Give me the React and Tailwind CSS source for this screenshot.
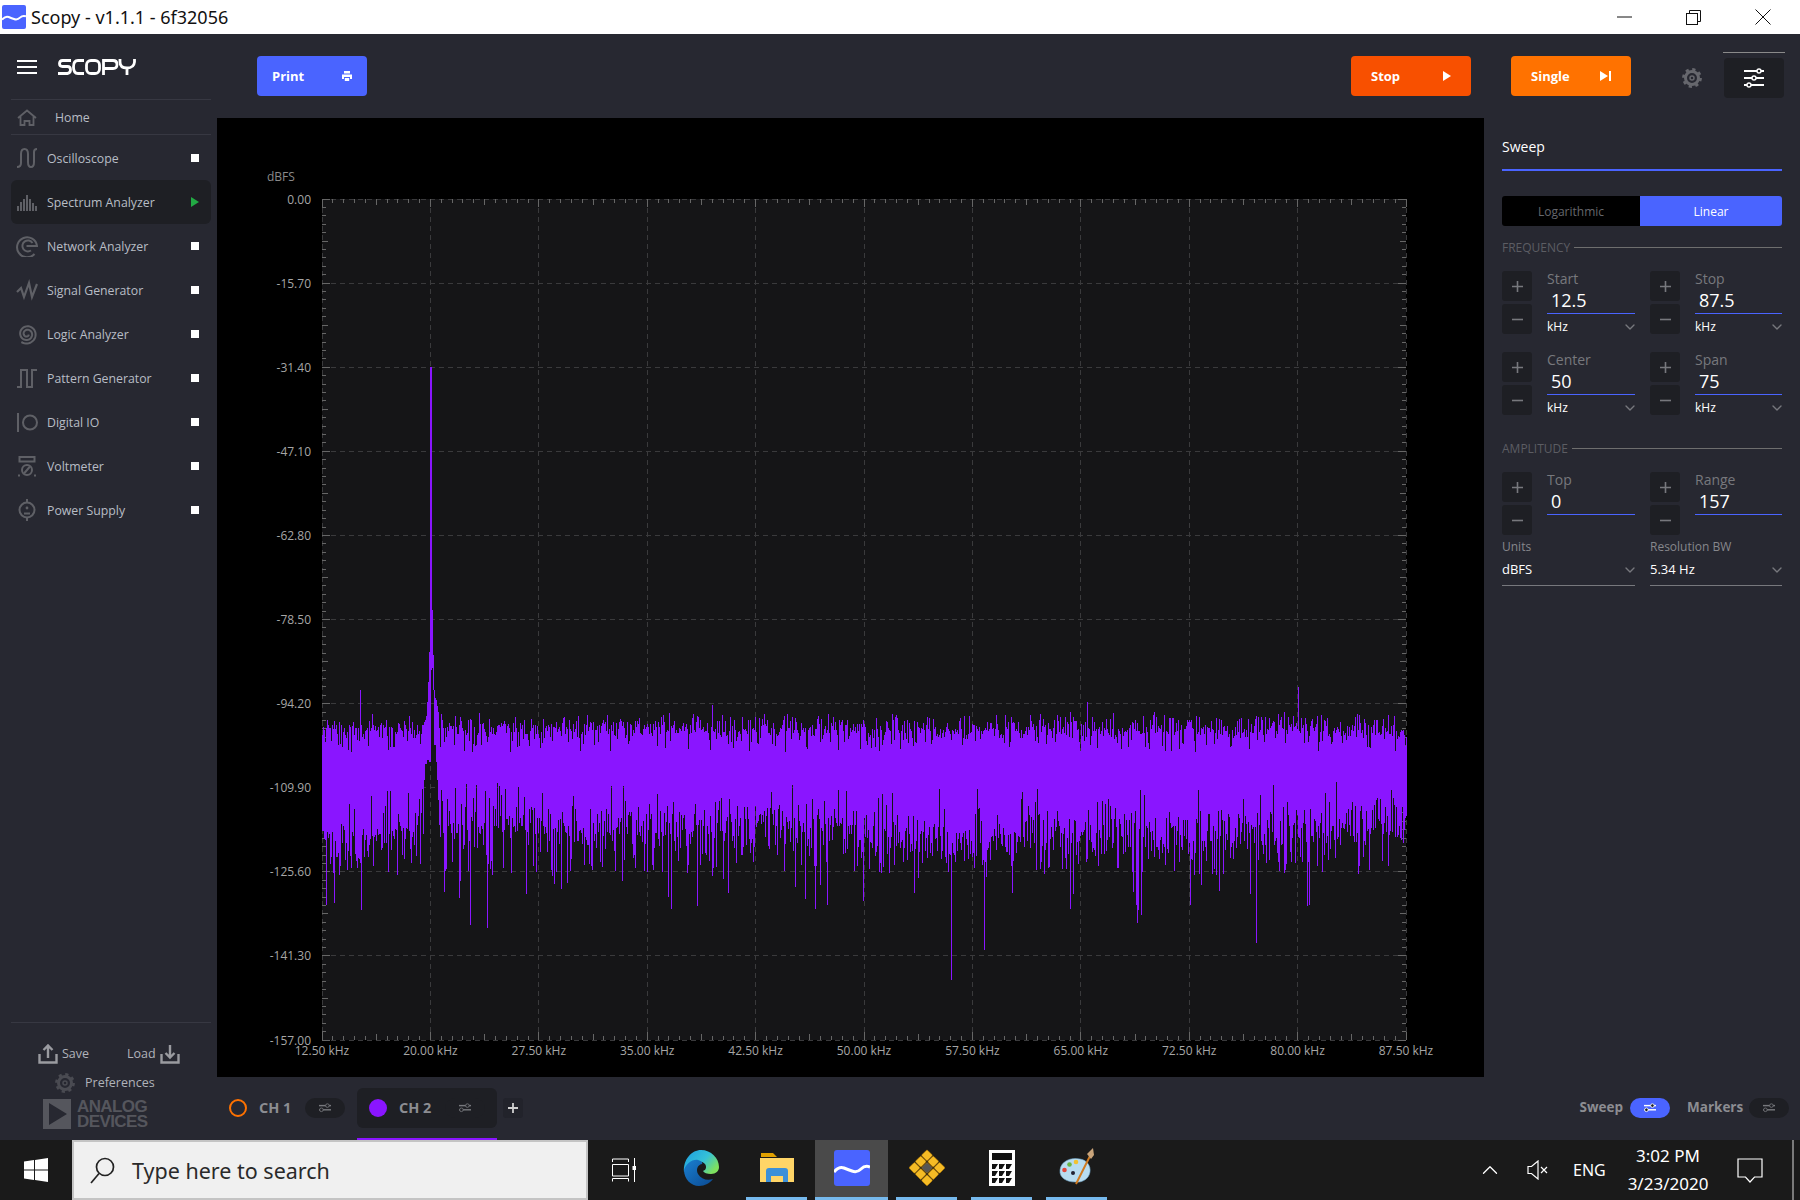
import { ChevronDown, ChevronUp } from "lucide-react";

const PLOT_L = 322, PLOT_W = 1084, PLOT_T = 199, PLOT_H = 841;
const PURPLE = "#8a15ff";

const rng = (seed) => () => {
    seed |= 0; seed = seed + 0x6D2B79F5 | 0;
    let t = Math.imul(seed ^ seed >>> 15, 1 | seed);
    t = t + Math.imul(t ^ t >>> 7, 61 | t) ^ t;
    return ((t ^ t >>> 14) >>> 0) / 4294967296;
};

const FORCED_TOP = { 360: 690, 1298: 687, 1087: 702, 712: 705 };
const FORCED_BOTTOM = { 951: 980, 984: 950, 1256: 943, 1137: 923, 1141: 915, 470: 925, 487: 928, 1012: 893, 1190: 905, 326: 905, 334: 903, 820: 885 };

// columns around the 20 kHz tone, read off the reference
const PEAK = {
    424: [722, 780], 425: [720, 764], 426: [716, 764], 427: [702, 760], 428: [682, 760], 429: [652, 762],
    430: [367, 762], 431: [367, 670], 432: [610, 668], 433: [655, 690], 434: [690, 745], 435: [698, 745],
    436: [700, 762], 437: [706, 780], 438: [712, 800],
};

const buildSpectrum = () => {
    const rand = rng(2024);
    const gauss = () => (rand() + rand() + rand() + rand() - 2) * 1.73;
    let d = "";
    for (let x = PLOT_L; x <= PLOT_L + PLOT_W; x++) {
        const drift = Math.sin(x / 47) * 5 + Math.sin(x / 131) * 6;
        const rt = rand();
        let top = 729 + gauss() * 6;
        if (rt < 0.1) top = 740 + rand() * 12;
        else if (rt < 0.16) top = 712 + rand() * 9;
        const rb = rand();
        let bottom = 832 + drift + gauss() * 13;
        if (rb < 0.08) bottom = 782 + rand() * 34;
        else if (rb < 0.2) bottom = 852 + rand() * 24;
        else if (rb < 0.23) bottom = 872 + rand() * 40;
        if (FORCED_TOP[x]) top = FORCED_TOP[x];
        if (FORCED_BOTTOM[x]) bottom = FORCED_BOTTOM[x];
        if (PEAK[x]) [top, bottom] = PEAK[x];
        d += `M${x + 0.5} ${top.toFixed(1)}V${bottom.toFixed(1)}`;
    }
    return d;
};
const spectrumPath = buildSpectrum();

const yLabels = ["0.00", "-15.70", "-31.40", "-47.10", "-62.80", "-78.50", "-94.20", "-109.90", "-125.60", "-141.30", "-157.00"];
const xLabels = ["12.50 kHz", "20.00 kHz", "27.50 kHz", "35.00 kHz", "42.50 kHz", "50.00 kHz", "57.50 kHz", "65.00 kHz", "72.50 kHz", "80.00 kHz", "87.50 kHz"];

const tickPaths = () => {
    let d = "";
    for (let i = 0; i <= 100; i++) {
        const y = PLOT_T + (PLOT_H * i) / 100;
        const x = PLOT_L + (PLOT_W * i) / 100;
        const len = i % 10 === 0 ? 8 : i % 5 === 0 ? 6 : 4;
        d += `M${PLOT_L} ${y.toFixed(1)}h${len}`;
        d += `M${PLOT_L + PLOT_W} ${y.toFixed(1)}h${-len}`;
        d += `M${x.toFixed(1)} ${PLOT_T}v${len}`;
        d += `M${x.toFixed(1)} ${PLOT_T + PLOT_H}v${-len}`;
    }
    return d;
};

const Plot = () => (
    <svg width="1267" height="959" viewBox="217 118 1267 959" className="block shrink-0">
        <rect x="217" y="118" width="1267" height="959" fill="#000" />
        <rect x={PLOT_L} y={PLOT_T} width={PLOT_W} height={PLOT_H} fill="#151517" />
        {yLabels.map((_, i) => (
            <line key={i} x1={PLOT_L} x2={PLOT_L + PLOT_W} y1={PLOT_T + 84.1 * i} y2={PLOT_T + 84.1 * i} stroke="#3a3a3c" strokeDasharray="5 4" shapeRendering="crispEdges" />
        ))}
        {xLabels.map((_, i) => (
            <line key={i} y1={PLOT_T} y2={PLOT_T + PLOT_H} x1={PLOT_L + 108.4 * i} x2={PLOT_L + 108.4 * i} stroke="#3a3a3c" strokeDasharray="5 4" shapeRendering="crispEdges" />
        ))}
        <path d={tickPaths()} stroke="#666" fill="none" shapeRendering="crispEdges" />
        <path d={spectrumPath} stroke={PURPLE} strokeWidth="1" fill="none" shapeRendering="crispEdges" />
        <g fontFamily="'Open Sans', sans-serif" fontSize="12" fill="#a6a6a6">
            <text x="267" y="181" fill="#8a8a8a">dBFS</text>
            {yLabels.map((t, i) => (
                <text key={t} x="311" y={PLOT_T + 84.1 * i + 4.5} textAnchor="end">{t}</text>
            ))}
            {xLabels.map((t, i) => (
                <text key={t} x={PLOT_L + 108.4 * i} y="1055" textAnchor="middle">{t}</text>
            ))}
        </g>
    </svg>
);

const IconBase = ({ children }) => (
    <svg width="22" height="22" viewBox="0 0 22 22" fill="none" stroke="#5f6066" strokeWidth="2" className="shrink-0">{children}</svg>
);

const spiral = () => {
    let d = "";
    for (let i = 0; i <= 90; i++) {
        const a = (i / 90) * Math.PI * 4.6 + 0.3;
        const r = 1.8 + (8 * i) / 90;
        d += `${i ? "L" : "M"}${(11 + r * Math.cos(a)).toFixed(2)} ${(11 + r * Math.sin(a)).toFixed(2)}`;
    }
    return d;
};

const navIcons = {
    scope: <IconBase><path d="M1 20q4 0 4-4V7q0-5 3.500-5T12 7v8q0 5 3 5t3-5V5q0-3 3-3" /></IconBase>,
    spectrum: <IconBase><path d="M2 20v-5M5 20v-9M8 20V8M11 20V4M14 20V8M17 20v-8M20 20v-5" /></IconBase>,
    network: <IconBase><path d="M18.500 19A10 10 0 1 1 21 11H10.500" /><path d="M15 15.500A5.500 5.500 0 1 1 16.500 8" /></IconBase>,
    signal: <IconBase><path d="M1 13l4-4 3 9 5-14 3 14 5-13" strokeWidth="2.200" /></IconBase>,
    logic: <IconBase><path d={spiral()} /></IconBase>,
    pattern: <IconBase><path d="M1 20h4V3h6v17h5V3h5" /></IconBase>,
    digital: <IconBase><path d="M2 2v19" /><circle cx="14" cy="11.500" r="7" /></IconBase>,
    volt: <IconBase><rect x="3.500" y="2" width="15" height="4.500" /><circle cx="11" cy="15" r="5" /><path d="M8 18.500l6-7M2 20.500h2M18 20.500h2" /></IconBase>,
    power: <IconBase><circle cx="11" cy="11" r="7.500" /><path d="M11 0v3.500M11 18.500V22M8 14.500h6" /><circle cx="11" cy="9" r="1.400" fill="#5f6066" stroke="none" /></IconBase>,
};

const navItems = [
    { name: "Oscilloscope", icon: "scope" },
    { name: "Spectrum Analyzer", icon: "spectrum", active: true },
    { name: "Network Analyzer", icon: "network" },
    { name: "Signal Generator", icon: "signal" },
    { name: "Logic Analyzer", icon: "logic" },
    { name: "Pattern Generator", icon: "pattern" },
    { name: "Digital IO", icon: "digital" },
    { name: "Voltmeter", icon: "volt" },
    { name: "Power Supply", icon: "power" },
];

const ScopyLogo = () => (
    <svg width="78" height="16" viewBox="0 0 78 16" fill="none" stroke="#fff" strokeWidth="2.800" role="img" aria-label="Scopy">
        <path d="M13 1.500H4.500Q1.500 1.500 1.500 4.500T4.500 7.500h5Q12.500 7.500 12.500 10.800T9.500 14.500H0" />
        <path d="M26 1.500h-6Q15.500 1.500 15.500 8T20 14.500h6" />
        <rect x="28.500" y="1.500" width="13" height="13" rx="4.500" />
        <path d="M45.500 16V1.500h9.500q4 0 4 4t-4 4h-9.500" />
        <path d="M62 0v3q0 6 7 6t7.500-6V0M69 9v7" />
    </svg>
);

const Sliders = ({ color = "#fff", w = 20, lines = 3 }) => {
    const rows = lines === 3 ? [[4, 15], [11, 10], [18, 5]] : [[7, 14], [14, 4]];
    return (
        <svg width={w} height="22" viewBox="0 0 20 22" fill="none" className="shrink-0">
            {rows.map(([y, k], i) => (
                <g key={i}>
                    <path d={`M0 ${y}H20`} stroke={color} strokeWidth={lines === 3 ? 2 : 2.4} />
                    <circle cx={k} cy={y} r={lines === 3 ? 2 : 3} fill="#1e1f24" stroke={color} strokeWidth="1.400" />
                </g>
            ))}
        </svg>
    );
};

const Pill = ({ blue }) => (
    <div className={`w-10 h-5 rounded-full flex items-center justify-center shrink-0 ${blue ? "bg-[#4a64ff]" : "bg-[#1e1f24]"}`}>
        <Sliders color={blue ? "#fff" : "#77787d"} w={12} lines={2} />
    </div>
);

const Gear = ({ size = 20, color = "#66676d" }) => (
    <svg width={size} height={size} viewBox="0 0 20 20" fill="none" stroke={color} className="shrink-0">
        <circle cx="10" cy="10" r="6.500" strokeWidth="3" />
        <circle cx="10" cy="10" r="8.600" strokeWidth="2.600" strokeDasharray="3.200 3.550" />
        <circle cx="10" cy="10" r="2" strokeWidth="1.500" />
    </svg>
);

const Sidebar = () => (
    <div className="w-[217px] shrink-0 flex flex-col">
        <div className="h-[65px] flex items-center pl-[17px] pt-[1px]">
            <div className="w-5 h-[14px] flex flex-col justify-between">
                <div className="h-[2px] bg-white" />
                <div className="h-[2px] bg-white" />
                <div className="h-[2px] bg-white" />
            </div>
            <div className="ml-[21px] flex"><ScopyLogo /></div>
        </div>
        <div className="ml-[11px] mr-[6px] h-[36px] border-y border-[#373842] flex items-center pl-[6px]">
            <svg width="20" height="17" viewBox="0 0 20 17" fill="none" stroke="#5f6066" strokeWidth="1.800" className="shrink-0">
                <path d="M1 9l9-7.500L19 9M3.500 7.500v8.500h4v-4h5v4h4V7.500" />
            </svg>
            <span className="ml-[18px] pt-[2px] text-[12.3px] text-[#b8bdc5]">Home</span>
        </div>
        <div className="mt-[1px]">
            {navItems.map((item) => (
                <div key={item.name} className={`ml-[11px] mr-[6px] h-[44px] flex items-center pl-[6px] pr-[12px] rounded-md ${item.active ? "bg-[#1e1f24]" : ""}`}>
                    <div className="w-[22px] -ml-[1px] flex">{navIcons[item.icon]}</div>
                    <span className="ml-[9px] pt-[2px] text-[12.3px] text-[#b8bdc5] flex-1">{item.name}</span>
                    {item.active ? (
                        <svg width="8" height="10" viewBox="0 0 8 10" className="shrink-0"><path d="M0 0l8 5-8 5z" fill="#22aa44" /></svg>
                    ) : (
                        <div className="w-2 h-2 bg-white" />
                    )}
                </div>
            ))}
        </div>
        <div className="mt-auto ml-[11px] mr-[6px] border-t border-[#373842] pt-[21px] pb-[11px]">
            <div className="flex items-center h-5 pl-[27px]">
                <svg width="20" height="20" viewBox="0 0 20 20" fill="none" stroke="#9a9ba0" strokeWidth="2.400" className="shrink-0">
                    <path d="M1.500 10v8.500h17V10M10 14V2M5.500 6L10 1.500 14.500 6" />
                </svg>
                <span className="ml-[4px] text-[12.5px] text-[#b0b3ba]">Save</span>
                <span className="ml-[38px] text-[12.5px] text-[#b0b3ba]">Load</span>
                <svg width="20" height="20" viewBox="0 0 20 20" fill="none" stroke="#9a9ba0" strokeWidth="2.400" className="ml-[4px] shrink-0">
                    <path d="M1.500 10v8.500h17V10M10 1v12M5.500 9L10 13.500 14.500 9" />
                </svg>
            </div>
            <div className="flex items-center h-5 mt-[9px] pl-[44px]">
                <Gear color="#4a4b52" />
                <span className="ml-[10px] text-[12.5px] text-[#b0b3ba]">Preferences</span>
            </div>
            <div className="flex items-center mt-[6px] pl-[32px]">
                <svg width="28" height="30" viewBox="0 0 28 30" className="shrink-0">
                    <path fillRule="evenodd" d="M0 0h28v30H0zM6 4v22l18-11z" fill="#55565d" />
                </svg>
                <div className="ml-[6px] text-[#55565d] font-bold text-[17px] leading-[15px] font-['Liberation_Sans',sans-serif] tracking-[-0.6px]">
                    <div>ANALOG</div>
                    <div>DEVICES</div>
                </div>
            </div>
        </div>
    </div>
);

const TopButton = ({ label, color, width, pad, className = "", children }) => (
    <div className={`h-10 rounded flex items-center justify-between text-[13px] font-bold text-white shrink-0 ${pad} ${color} ${width} ${className}`}>
        <span className="pt-[2px]">{label}</span>
        {children}
    </div>
);

const TopBar = () => (
    <div className="h-[84px] flex items-center pl-[40px] shrink-0">
        <TopButton label="Print" color="bg-[#4a64ff]" width="w-[110px]" pad="px-[15px]">
            <svg width="10" height="10" viewBox="0 0 10 10" fill="#fff" className="shrink-0"><path d="M2 0h6v2.500H2zM0 3.500h10V8H8V6H2v2H0zM2.800 7h4.400v3H2.800z" /></svg>
        </TopButton>
        <TopButton label="Stop" color="bg-[#f85000]" width="w-[120px]" pad="px-5" className="ml-[984px]">
            <svg width="8" height="10" viewBox="0 0 8 10" fill="#fff" className="shrink-0"><path d="M0 0l8 5-8 5z" /></svg>
        </TopButton>
        <TopButton label="Single" color="bg-[#ff7200]" width="w-[120px]" pad="px-5" className="ml-[40px]">
            <svg width="11" height="10" viewBox="0 0 11 10" fill="#fff" className="shrink-0"><path d="M0 0l8 5-8 5zM9 0h2v10H9z" /></svg>
        </TopButton>
        <div className="ml-[51px] mt-1 flex"><Gear /></div>
        <div className="ml-[21px] self-start mt-[18px] w-[62px] flex flex-col">
            <div className="h-px bg-[#8a8a8a]" />
            <div className="mt-[5px] mx-px h-10 rounded bg-[#1e1f24] flex items-center justify-center">
                <Sliders />
            </div>
        </div>
    </div>
);

const SpinButton = ({ minus }) => (
    <div className="w-[30px] h-[30px] rounded-[3px] bg-[#1e1f24] flex items-center justify-center">
        <svg width="11" height="11" viewBox="0 0 11 11" stroke="#77787d" strokeWidth="1.600">
            <path d={minus ? "M0 5.500h11" : "M0 5.500h11M5.500 0v11"} />
        </svg>
    </div>
);

const SpinBox = ({ label, value, unit }) => (
    <div className="flex h-[63px]">
        <div className="flex flex-col gap-[3px] shrink-0">
            <SpinButton />
            <SpinButton minus />
        </div>
        <div className="ml-[15px] flex-1">
            <div className="h-4 leading-4 text-[14px] text-[#77787d]">{label}</div>
            <div className="h-[27px] border-b border-[#4a64ff] pl-1 text-[18px] leading-[27px] text-white">{value}</div>
            {unit && (
                <div className="h-[26px] flex items-center justify-between text-[12px] text-white">
                    <span>{unit}</span>
                    <ChevronDown size={16} strokeWidth={2} className="text-[#77787d] -mr-[3px]" />
                </div>
            )}
        </div>
    </div>
);

const SectionTitle = ({ children }) => (
    <div className="h-4 flex items-center gap-1 text-[12px] text-[#5c5d63]">
        <span>{children}</span>
        <div className="flex-1 h-px bg-[#6e6e6e] -mt-[2px]" />
    </div>
);

const SelectBox = ({ label, value }) => (
    <div>
        <div className="h-4 leading-4 text-[12px] text-[#86878c]">{label}</div>
        <div className="h-[31px] border-b border-[#77787d] flex items-center justify-between text-[13px] text-white">
            <span>{value}</span>
            <ChevronDown size={16} strokeWidth={2} className="text-[#77787d] -mr-[3px]" />
        </div>
    </div>
);

const SweepPanel = () => (
    <div className="flex-1 pl-[18px] pr-[18px] pt-[19px]">
        <div className="h-[34px] border-b-2 border-[#4a64ff] text-[14px] leading-5 text-white">Sweep</div>
        <div className="mt-[25px] h-[30px] flex text-[12px] leading-[31px] text-center">
            <div className="w-[138px] bg-black rounded-l-[3px] text-[#66676c]">Logarithmic</div>
            <div className="flex-1 bg-[#4a64ff] rounded-r-[3px] text-white">Linear</div>
        </div>
        <div className="mt-[14px]"><SectionTitle>FREQUENCY</SectionTitle></div>
        <div className="mt-[15px] grid grid-cols-[133px_132px] gap-x-[15px] gap-y-[18px]">
            <SpinBox label="Start" value="12.5" unit="kHz" />
            <SpinBox label="Stop" value="87.5" unit="kHz" />
            <SpinBox label="Center" value="50" unit="kHz" />
            <SpinBox label="Span" value="75" unit="kHz" />
        </div>
        <div className="mt-[26px]"><SectionTitle>AMPLITUDE</SectionTitle></div>
        <div className="mt-[15px] grid grid-cols-[133px_132px] gap-x-[15px]">
            <SpinBox label="Top" value="0" />
            <SpinBox label="Range" value="157" />
        </div>
        <div className="mt-[4px] grid grid-cols-[133px_132px] gap-x-[15px]">
            <SelectBox label="Units" value="dBFS" />
            <SelectBox label="Resolution BW" value="5.34 Hz" />
        </div>
    </div>
);

const ChannelBar = () => (
    <div className="h-[63px] flex items-center pl-[12px] pr-[11px] pb-[2px] shrink-0 text-[14.5px] font-bold text-[#8c8d92]">
        <div className="w-[18px] h-[18px] rounded-full border-2 border-[#ff7200] shrink-0" />
        <span className="ml-3 w-[33px] whitespace-nowrap">CH 1</span>
        <div className="ml-[13px]"><Pill /></div>
        <div className="ml-3 self-start flex flex-col h-[63px] w-[140px]">
            <div className="mt-[11px] h-10 rounded-md bg-[#1e1f24] flex items-center pl-3">
                <div className="w-[18px] h-[18px] rounded-full bg-[#8a15ff] shrink-0" />
                <span className="ml-3 w-[34px] whitespace-nowrap">CH 2</span>
                <div className="ml-3"><Pill /></div>
            </div>
            <div className="mt-auto h-[2px] bg-[#8a15ff]" />
        </div>
        <div className="ml-[6px] w-5 h-5 rounded-[3px] bg-[#22232b] flex items-center justify-center">
            <svg width="10" height="10" viewBox="0 0 10 10" stroke="#d0d0d0" strokeWidth="1.800"><path d="M0 5h10M5 0v10" /></svg>
        </div>
        <span className="ml-auto text-[13.5px]">Sweep</span>
        <div className="ml-[7px]"><Pill blue /></div>
        <span className="ml-[17px] w-[55px] text-[13.5px] whitespace-nowrap">Markers</span>
        <div className="ml-[7px]"><Pill /></div>
    </div>
);

const ScopyGlyph = ({ size }) => (
    <svg width={size} height={size} viewBox="0 0 36 36" className="shrink-0">
        <rect width="36" height="36" rx="3" fill="#4a64ff" />
        <path d="M0 22q5-6 10-4t8 3q5 2 9-2t9-2" fill="none" stroke="#fff" strokeWidth="3" />
    </svg>
);

const EdgeIcon = () => (
    <svg width="36" height="36" viewBox="0 0 36 36" className="shrink-0">
        <defs>
            <linearGradient id="edgeTop" x1="0" y1="0" x2="1" y2="0.6">
                <stop offset="0" stopColor="#1b9de2" />
                <stop offset="0.6" stopColor="#35c1d8" />
                <stop offset="1" stopColor="#7ee05f" />
            </linearGradient>
            <linearGradient id="edgeLow" x1="0" y1="0" x2="1" y2="1">
                <stop offset="0" stopColor="#1a7fd0" />
                <stop offset="1" stopColor="#0b4a92" />
            </linearGradient>
        </defs>
        <path d="M1 22C0 9 9 0 18 0c10 0 18 8 18 17 0 4-3 7-8 7-4 0-7-1-8-3 3-1 4-4 2-7-3-4-11-3-15 1-3 3-5 6-6 7z" fill="url(#edgeTop)" />
        <path d="M1 20c2-6 8-11 14-10 4 1 5 3 4 4-5 1-6 6-4 10 3 5 9 7 15 5-3 4-8 7-14 7C8 36 1 29 1 20z" fill="url(#edgeLow)" />
    </svg>
);

const FolderIcon = () => (
    <svg width="34" height="30" viewBox="0 0 34 30" className="shrink-0">
        <path d="M1 0h12l4 4H1z" fill="#e0a000" />
        <path d="M0 5h34v24H0z" fill="#ffd567" />
        <path d="M6 18q0-3 3-3h16q3 0 3 3v11h-5v-6H11v6H6z" fill="#3c90d8" />
        <path d="M11 23h12v6H11z" fill="#ffd567" />
    </svg>
);

const DiamondIcon = () => {
    const cells = [0, 1, 2].flatMap((r) => [0, 1, 2].map((c) => [r, c]));
    return (
        <svg width="36" height="42" viewBox="0 0 36 42" className="shrink-0">
            <g transform="translate(18 21) rotate(45) scale(1.08)">
                {cells.map(([r, c]) => (
                    <rect key={`${r}${c}`} x={-12 + c * 8.2} y={-12 + r * 8.2} width="7.400" height="7.400" rx="1" fill={r === 1 && c === 1 ? "#555" : "#f5bb25"} stroke="#b37a00" strokeWidth="0.500" />
                ))}
            </g>
        </svg>
    );
};

const CalcIcon = () => (
    <svg width="26" height="36" viewBox="0 0 26 36" className="shrink-0">
        <rect width="26" height="36" fill="#fff" />
        <rect x="3" y="3" width="20" height="7" fill="#111" />
        {[14, 21, 28].map((y) => [3, 10, 17].map((x) => (
            <path key={`${x}${y}`} d={`M${x} ${y}h6l-3 5h-3z`} fill="#111" />
        )))}
    </svg>
);

const PaintIcon = () => (
    <svg width="36" height="40" viewBox="0 0 36 40" className="shrink-0">
        <path d="M1 22C2 13 12 9 21 11c7 1 11 7 10 13-1 7-8 11-15 10C8 34 0 30 1 22z" fill="#b8dcf0" stroke="#6ea3c4" strokeWidth="0.600" />
        <circle cx="5.500" cy="22" r="2.300" fill="#e2483c" />
        <circle cx="10.500" cy="16.500" r="2.300" fill="#68b544" />
        <circle cx="17" cy="14" r="2.300" fill="#f2c230" />
        <circle cx="14" cy="25" r="2" fill="#223" />
        <path d="M32 6L17 36" stroke="#d07a20" strokeWidth="2" />
        <path d="M28 6l6-6 1 7-3 4z" fill="#c9a47a" />
    </svg>
);

const Slot = ({ width, className = "", active, underline, children }) => (
    <div className={`${width} h-[60px] flex flex-col shrink-0 ${active ? "bg-[#4a4a4a]" : ""} ${className}`}>
        <div className="flex-1 flex items-center justify-center pb-px">{children}</div>
        <div className={`h-[3px] ${underline ? "bg-[#76b9ed]" : ""}`} />
    </div>
);

const Taskbar = () => (
    <div className="h-[60px] bg-[#1a1a1a] flex items-center shrink-0 text-white">
        <div className="w-[72px] flex justify-center shrink-0">
            <svg width="24" height="24" viewBox="0 0 24 24" fill="#fff">
                <path d="M0 3.400l10-1.400v9.400H0zM11 1.900L24 0v11.400H11zM0 12.400h10v9.500L0 20.500zM11 12.400h13V24l-13-1.900z" />
            </svg>
        </div>
        <div className="w-[516px] h-[60px] bg-[#f0f0f0] border-2 border-[#c4c4c4] flex items-center pl-[16px] shrink-0">
            <svg width="25" height="27" viewBox="0 0 25 27" fill="none" stroke="#222" strokeWidth="1.700" className="shrink-0">
                <circle cx="15" cy="10" r="8.500" />
                <path d="M9 16.500L1 26" />
            </svg>
            <span className="ml-[17px] pt-[2px] text-[21.5px] text-[#2a2a2a] font-['Noto_Sans',sans-serif]">Type here to search</span>
        </div>
        <svg width="24" height="24" viewBox="0 0 24 24" fill="none" stroke="#fff" className="ml-[24px] shrink-0">
            <path d="M0.500 4V1h16v3M0.500 6.500h16V18H0.500zM0.500 23.500V20.500h16v3M22.500 0v24" />
            <rect x="20.500" y="8" width="4" height="4" fill="#fff" stroke="none" />
        </svg>
        <Slot width="w-[61px]" className="ml-[34px]"><EdgeIcon /></Slot>
        <Slot width="w-[61px]" className="ml-[15px]" underline><FolderIcon /></Slot>
        <Slot width="w-[73px]" className="ml-[8px]" active underline><ScopyGlyph size={36} /></Slot>
        <Slot width="w-[61px]" className="ml-[8px]" underline><DiamondIcon /></Slot>
        <Slot width="w-[61px]" className="ml-[14px]" underline><CalcIcon /></Slot>
        <Slot width="w-[61px]" className="ml-[14px]" underline><PaintIcon /></Slot>
        <ChevronUp size={26} strokeWidth={1.200} className="ml-[370px] shrink-0" />
        <svg width="22" height="20" viewBox="0 0 22 20" fill="none" stroke="#fff" strokeWidth="1.200" className="ml-[24px] shrink-0">
            <path d="M1 6.500h3.500L11 1v18l-6.500-5.500H1zM14 7l6 6M20 7l-6 6" />
        </svg>
        <span className="ml-[24px] text-[16px] font-['Noto_Sans',sans-serif] w-[38px]">ENG</span>
        <div className="ml-[13px] w-[88px] text-center text-[17px] leading-[28px] font-['Noto_Sans',sans-serif] whitespace-nowrap">
            <div>3:02 PM</div>
            <div>3/23/2020</div>
        </div>
        <svg width="26" height="25" viewBox="0 0 26 25" fill="none" stroke="#fff" strokeWidth="1.200" className="ml-[25px] shrink-0">
            <path d="M1 1h24v18h-7.500L13 24l-4.500-5H1z" />
        </svg>
        <div className="ml-auto mr-[6px] w-[2px] h-[60px] bg-[#7a7a7a]" />
    </div>
);

const TitleBar = () => (
    <div className="h-[34px] bg-white flex items-center shrink-0 pl-[2px]">
        <ScopyGlyph size={24} />
        <span className="ml-[5px] text-[18px] text-[#111] font-['Noto_Sans',sans-serif]">Scopy - v1.1.1 - 6f32056</span>
        <svg width="15" height="2" viewBox="0 0 15 2" className="ml-auto shrink-0"><path d="M0 1h15" stroke="#111" strokeWidth="1" /></svg>
        <svg width="15" height="15" viewBox="0 0 15 15" fill="none" stroke="#111" className="ml-[54px] shrink-0">
            <rect x="0.500" y="3.500" width="11" height="11" />
            <path d="M3.500 3V0.500h11v11H12" />
        </svg>
        <svg width="16" height="16" viewBox="0 0 16 16" stroke="#111" className="ml-[54px] mr-[29px] shrink-0"><path d="M0.500 0.500l15 15M15.500 0.500l-15 15" /></svg>
    </div>
);

export default function App() {
    return (
        <div className="w-[1800px] h-[1200px] flex flex-col overflow-hidden bg-[#272831] font-['Open_Sans',sans-serif]">
            <TitleBar />
            <div className="flex-1 flex min-h-0">
                <Sidebar />
                <div className="flex-1 flex flex-col min-w-0">
                    <TopBar />
                    <div className="h-[959px] flex shrink-0">
                        <Plot />
                        <SweepPanel />
                    </div>
                    <ChannelBar />
                </div>
            </div>
            <Taskbar />
        </div>
    );
}
